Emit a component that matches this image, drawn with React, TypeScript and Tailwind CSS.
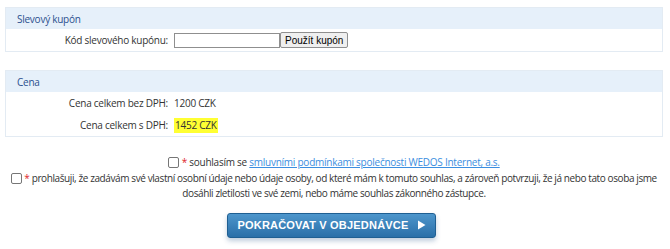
const font = { fontFamily: '"Open Sans", "Noto Sans", sans-serif' };

const Panel = ({ title, children }: { title: string; children: React.ReactNode }) => (
  <div className="border border-[#e3ebf3] bg-white">
    <div className="h-[21px] bg-[#e6f0fa] pl-[11px] text-[10px] leading-[22px] tracking-[-0.25px] text-[#2b4f8e]">{title}</div>
    <div>{children}</div>
  </div>
);

const Row = ({ label, children }: { label: string; children: React.ReactNode }) => (
  <div className="flex h-[22px] items-center text-[10px] tracking-[-0.25px] text-[#333]">
    <div className="w-[162px] text-right">{label}</div>
    <div className="ml-[6px] flex items-center">{children}</div>
  </div>
);

const Check = () => (
  <span className="inline-block h-[11px] w-[11px] translate-y-[2px] rounded-[2px] border border-[#767676] bg-white" />
);

export default function App() {
  return (
    <div className="h-[249px] w-[670px] bg-white pl-[5px] pr-[7px] pt-[7px]" style={font}>
      <Panel title="Slevový kupón">
        <Row label="Kód slevového kupónu:">
          <input className="h-[15px] w-[106px] border border-[#8f8f8f] bg-white outline-none" />
          <button className="h-[16px] rounded-[2px] border border-[#8f8f8f] bg-[#efefef] px-[4px] text-[10px] leading-[13px] tracking-normal text-black" style={{ fontFamily: '"Liberation Sans", Arial, sans-serif' }}>
            Použít kupón
          </button>
        </Row>
      </Panel>

      <div className="mt-[18px]">
        <Panel title="Cena">
          <Row label="Cena celkem bez DPH:">1200 CZK</Row>
          <Row label="Cena celkem s DPH:">
            <span className="bg-[#ffff33] px-[1px]">1452 CZK</span>
          </Row>
        </Panel>
      </div>

      <div className="mt-[18px] text-center text-[10px] leading-[15.5px] tracking-[-0.25px] text-[#333]">
        <div>
          <Check /> <span className="text-[#e0252a]">*</span> souhlasím se{' '}
          <a className="text-[#3b8ee0] underline">smluvními podmínkami společnosti WEDOS Internet, a.s.</a>
        </div>
        <div className="tracking-[-0.4px]">
          <Check /> <span className="text-[#e0252a]">*</span> prohlašuji, že zadávám své vlastní osobní údaje nebo údaje osoby, od které mám k tomuto souhlas, a zároveň potvrzuji, že já nebo tato osoba jsme
          <br />
          dosáhli zletilosti ve své zemi, nebo máme souhlas zákonného zástupce.
        </div>
      </div>

      <div className="mt-[11px] flex justify-center pr-[5px]">
        <button
          className="flex h-[25px] w-[209px] items-center justify-center gap-[8px] rounded-[3px] border border-[#1f5f92] bg-gradient-to-b from-[#4d96cc] to-[#2a6fa8] text-[11px] font-bold tracking-[0.2px] text-white shadow-[0_3px_5px_rgba(0,60,120,0.25)]"
          style={{ fontFamily: '"Liberation Sans", Arial, sans-serif' }}
        >
          POKRAČOVAT V OBJEDNÁVCE
          <svg width="9" height="10" viewBox="0 0 9 10"><path d="M1 0.5 L8.5 5 L1 9.5 Z" fill="white" /></svg>
        </button>
      </div>
    </div>
  );
}
